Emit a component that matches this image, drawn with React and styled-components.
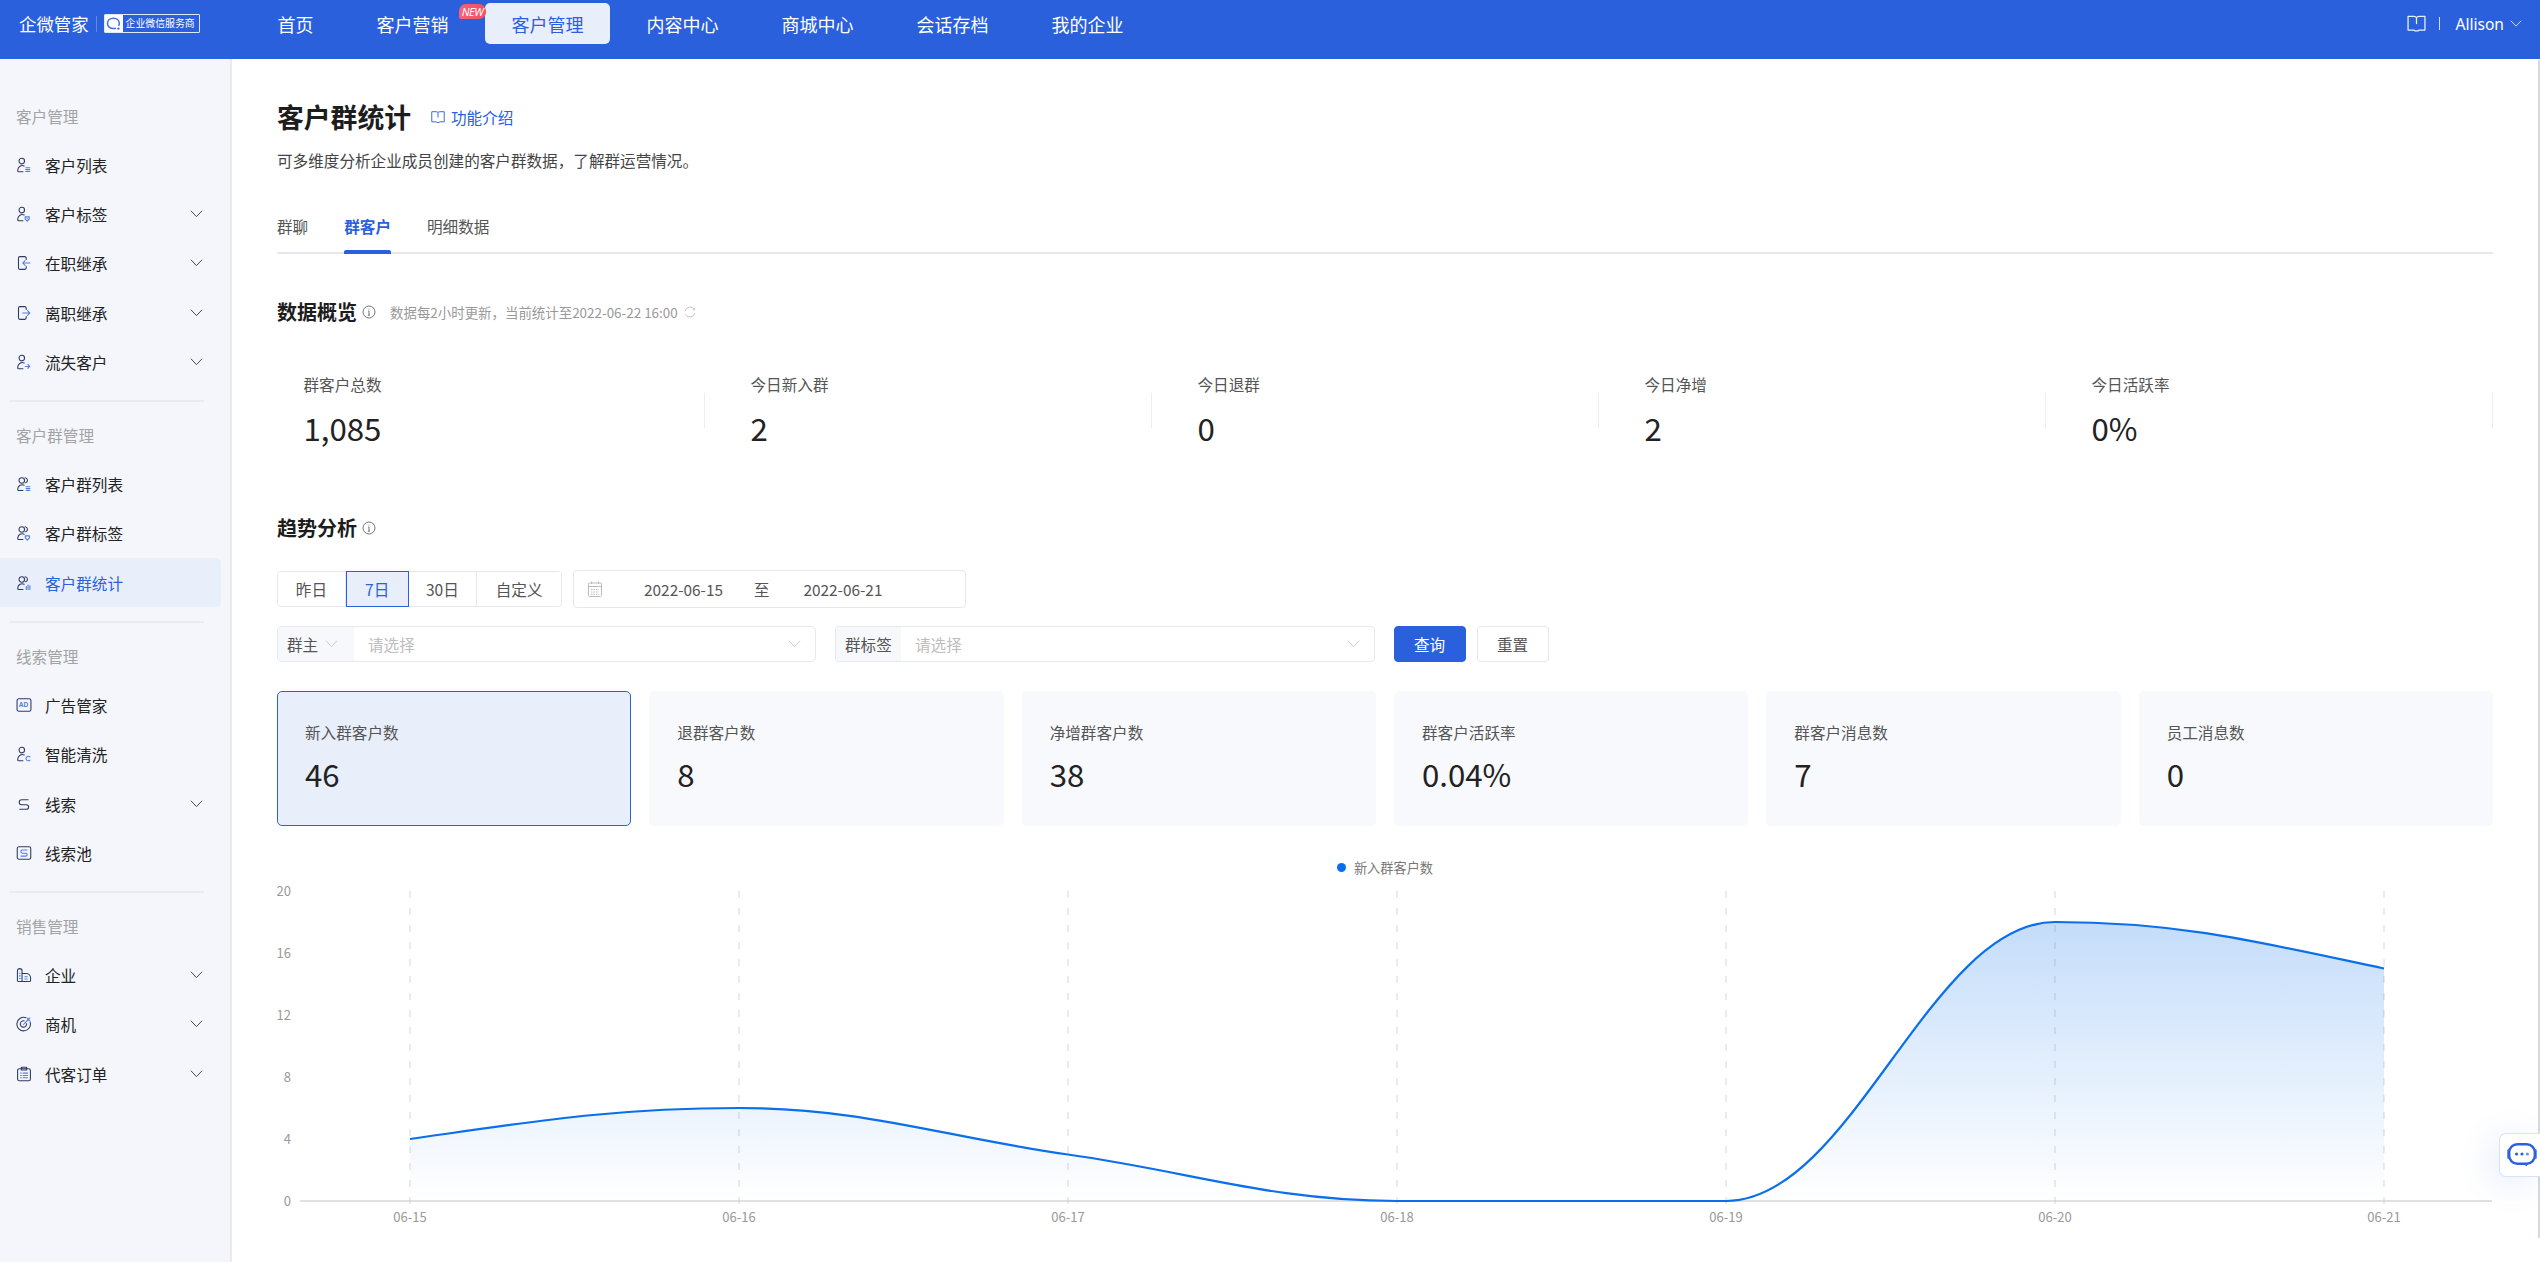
import React from 'react';
import styled, { createGlobalStyle } from 'styled-components';

const FONT = '"Noto Sans CJK SC", "Noto Sans", sans-serif';
const BLUE = '#2b60dc';

const Global = createGlobalStyle`
  html, body { margin: 0; padding: 0; height: 100%; overflow: hidden; background: #fff; }
  body { font-family: ${FONT}; color: #222; }
  * { box-sizing: border-box; }
`;

const Page = styled.div`
  width: 2540px; height: 1262px; display: flex; flex-direction: column; position: relative; overflow: hidden;
`;

/* ---------- top bar ---------- */
const TopBar = styled.header`
  height: 59px; flex: none; background: ${BLUE}; display: flex; align-items: flex-start; padding: 3px 18px 0 19px; color: #fff;
`;
const Brand = styled.div`
  width: 232px; height: 41px; flex: none; display: flex; align-items: center; font-size: 17.4px; line-height: 41px;
`;
const BrandRule = styled.span`
  width: 1px; height: 16px; background: rgba(255,255,255,.25); margin: 0 7px;
`;
const Partner = styled.span`
  display: flex; height: 19px; width: 96px; border: 1px solid rgba(255,255,255,.85); align-items: center; font-size: 9.9px; line-height: 17px; border-radius: 1px;
`;
const PartnerMark = styled.span`
  width: 18px; height: 17px; background: #fff; display: flex; align-items: center; justify-content: center; flex: none; margin-right: 3px;
`;
const Nav = styled.nav`
  display: flex; gap: 10px; 
`;
const NavItem = styled.a`
  position: relative; height: 41px; padding: 0 26.5px; display: flex; align-items: center; font-size: 18px; border-radius: 5px;
  color: ${p => (p.$active ? BLUE : '#fff')}; background: ${p => (p.$active ? '#e8eefa' : 'transparent')};
`;
const NewBadge = styled.span`
  position: absolute; left: 109px; top: 1px; width: 27px; height: 15px; z-index: 2; border-radius: 7px 7px 7px 2px;
  background: linear-gradient(90deg, #f2647c, #f54d5d); color: #fff; font-size: 11px; line-height: 15px; font-style: italic; text-align: center; letter-spacing: -.4px; font-family: "Noto Sans", sans-serif;
`;
const TopRight = styled.div`
  margin-left: auto; height: 41px; display: flex; align-items: center; font-size: 15.6px; font-family: "Noto Sans", sans-serif;
`;
const TopRule = styled.span`
  width: 1px; height: 13px; background: rgba(255,255,255,.8); margin: 0 15px 0 13px;
`;
const UserChevron = styled.span`
  display: flex; margin-left: 6px;
`;

/* ---------- shell ---------- */
const Shell = styled.div`
  flex: 1; display: flex; min-height: 0;
`;
const Side = styled.aside`
  width: 232px; flex: none; background: #f4f6fb; border-right: 2px solid #e9ebf1; padding-top: 44.6px;
`;
const SideLabel = styled.div`
  font-size: 15.6px; line-height: 24px; color: #a3a3a3; padding-left: 16px; margin-bottom: 12.6px;
`;
const SideRule = styled.div`
  height: 2px; background: #e9ebf0; margin: 14px 26px 20.5px 10px;
`;
const SideItem = styled.a`
  height: 49.25px; width: 221px; display: flex; align-items: center; padding: 0 18px 0 16px; font-size: 15.6px; border-radius: 0 5px 5px 0;
  color: ${p => (p.$active ? BLUE : '#222')}; background: ${p => (p.$active ? '#e8eefa' : 'transparent')};
`;
const SideIcon = styled.span`
  width: 16px; height: 18px; margin-right: 13px; display: flex; align-items: center; justify-content: center; flex: none;
`;
const SideChevron = styled.span`
  margin-left: auto; display: flex;
`;
const Glyph = styled.svg`
  display: block; fill: none; stroke: #2d3a63; stroke-width: 1.2; stroke-linecap: round; stroke-linejoin: round;
  .a { stroke: #4c7ce6; }
  .f { fill: #4c7ce6; stroke: none; }
  text { fill: #4c7ce6; stroke: none; font-family: "Liberation Sans", sans-serif; font-size: 7.5px; font-weight: 700; }
`;

const Main = styled.main`
  flex: 1; min-width: 0; padding: 40px 47px 0 45px; overflow: hidden;
`;
const TitleRow = styled.div`
  display: flex; align-items: center; height: 36px;
`;
const Title = styled.h1`
  margin: 0; font-size: 26.8px; line-height: 36px; font-weight: 700; color: #1d1d1d;
`;
const HelpLink = styled.a`
  margin-left: 20px; display: flex; align-items: center; gap: 6px; font-size: 15.6px; color: ${BLUE};
`;
const Sub = styled.p`
  margin: 13px 0 0; font-size: 15.6px; line-height: 24px; color: #444;
`;
const Tabs = styled.div`
  display: flex; gap: 36px; height: 49px; margin-top: 33px; border-bottom: 2px solid #e5e8ee;
`;
const Tab = styled.a`
  position: relative; font-size: 15.6px; line-height: 24px; padding-top: 9px; height: 47px; color: ${p => (p.$active ? BLUE : '#555')}; font-weight: ${p => (p.$active ? 700 : 400)};
  ${p => p.$active && `&::after { content: ""; position: absolute; left: 0; right: 0; bottom: -2px; height: 4px; background: ${BLUE}; border-radius: 2px 2px 0 0; }`}
`;
const SectionHead = styled.div`
  display: flex; align-items: center; height: 28px; margin-top: ${p => p.$top}px;
`;
const SectionTitle = styled.h2`
  margin: 0; font-size: 20px; line-height: 28px; font-weight: 700; color: #1d1d1d;
`;
const InfoWrap = styled.span`
  display: flex; margin-left: 5px; color: #777;
`;
const Hint = styled.span`
  margin-left: 14px; font-size: 13.45px; color: #999; white-space: nowrap;
`;
const RefreshWrap = styled.span`
  display: flex; margin-left: 6px;
`;

const Overview = styled.div`
  display: grid; grid-template-columns: repeat(5, 447px); margin: 45.5px 0 0 -19.5px;
`;
const OverviewCell = styled.div`
  position: relative; padding-left: 46px;
  &::after { content: ""; position: absolute; right: 0; top: 21px; height: 35px; width: 1px; background: #eceef2; }
`;
const StatLabel = styled.div`
  font-size: 15.6px; line-height: 24px; color: #555;
`;
const StatValue = styled.div`
  font-size: 31.2px; line-height: 40px; margin-top: ${p => p.$gap}px; color: #222; font-weight: 400;
`;

const ControlRow = styled.div`
  display: flex; align-items: center; height: ${p => p.$h}px; margin-top: ${p => p.$top}px;
`;
const Segments = styled.div`
  display: flex; height: 36px; width: 285px; border: 1px solid #e6e8ec; border-radius: 4px;
`;
const Segment = styled.button`
  width: ${p => p.$w}px; height: ${p => (p.$active ? '36px' : '34px')}; margin: ${p => (p.$active ? '-1px 0' : 0)}; padding: 0; font: inherit; font-size: 15.6px; font-family: ${FONT};
  background: ${p => (p.$active ? '#e8eefa' : '#fff')}; color: ${p => (p.$active ? BLUE : '#555')};
  border: ${p => (p.$active ? `1px solid ${BLUE}` : 'none')}; border-right: ${p => (p.$active ? `1px solid ${BLUE}` : '1px solid #e6e8ec')};
  border-radius: ${p => (p.$first ? '3px 0 0 3px' : 0)};
  &:last-child { border-right: none; border-radius: 0 3px 3px 0; }
`;
const DateRange = styled.div`
  margin-left: 11px; width: 393px; height: 38px; border: 1px solid #e6e8ec; border-radius: 4px; display: flex; align-items: center; padding-left: 14px; font-size: 15.4px; color: #555;
`;
const DateValue = styled.span`
  margin-left: ${p => p.$left}px; white-space: nowrap;
`;
const Select = styled.div`
  width: ${p => p.$w}px; height: 36px; margin-right: ${p => p.$gap}px; border: 1px solid #e6e8ec; border-radius: 4px; display: flex; align-items: center; font-size: 15.6px; flex: none; padding-right: 14px;
`;
const Addon = styled.span`
  width: ${p => p.$w}px; height: 34px; background: #f7f8fc; border-radius: 3px 0 0 3px; display: flex; align-items: center; padding-left: 9px; gap: 7px; color: #555; flex: none;
`;
const Placeholder = styled.span`
  margin-left: 14px; color: #bdbdbd;
`;
const SelectChevron = styled.span`
  margin-left: auto; display: flex;
`;
const Button = styled.button`
  width: 72px; height: 36px; margin-right: 11px; padding: 0; font-size: 15.6px; font-family: ${FONT}; border-radius: 4px; flex: none;
  background: ${p => (p.$primary ? BLUE : '#fff')}; color: ${p => (p.$primary ? '#fff' : '#555')}; border: 1px solid ${p => (p.$primary ? BLUE : '#e6e8ec')};
`;
const Cards = styled.div`
  display: grid; grid-template-columns: repeat(6, 1fr); gap: 18px; margin-top: 29px;
`;
const Card = styled.div`
  height: 135px; border-radius: 5px; padding: 27.5px 27px 0; background: ${p => (p.$active ? '#e8eefa' : '#f8f9fd')}; border: 1px solid ${p => (p.$active ? BLUE : '#f8f9fd')};
`;
const Legend = styled.div`
  display: flex; justify-content: center; align-items: center; gap: 8px; height: 20px; margin-top: 31px; font-size: 13.2px; color: #777;
`;
const LegendDot = styled.span`
  width: 9px; height: 9px; border-radius: 50%; background: #0a6fea;
`;
const ChartSvg = styled.svg`
  display: block; width: 2216px; height: 360px;
  text { font-family: ${FONT}; font-size: 13px; fill: #999; }
`;
const HelpFloat = styled.div`
  position: absolute; right: 0; top: 1133px; width: 41px; height: 44px; background: #fff; border: 1px solid #d5e3fb; border-right: none; border-radius: 7px 0 0 7px;
  display: flex; align-items: center; justify-content: center; box-shadow: -8px 6px 34px rgba(70,110,230,.12); padding-left: 4px;
`;
const ScrollThumb = styled.div`
  position: absolute; right: 0; top: 60px; width: 2px; height: 1178px; background: #d8d9dc;
`;

/* ---------- drawings ---------- */
const Chevron = ({ color = '#3b4668', w = 13 }) => (
  <svg width={w} height={w * 0.6} viewBox="0 0 13 8" fill="none" stroke={color} strokeWidth="1"><path d="M.8.8l5.7 6 5.7-6" /></svg>
);
const Book = ({ color, size }) => (
  <svg width={size} height={size} viewBox="0 0 18 18" fill="none" stroke={color} strokeWidth="1.2" strokeLinejoin="round">
    <path d="M1 2.2h5.5c1.2 0 2 .5 2.5 1.2.5-.7 1.3-1.2 2.5-1.2H17v13H11.5l-1 .8h-3l-1-.8H1z" />
    <path d="M9 3.4v6.2" />
  </svg>
);
const Info = () => (
  <svg width="14" height="14" viewBox="0 0 14 14" fill="none" stroke="#777" strokeWidth="1"><circle cx="7" cy="7" r="6" /><path d="M7 6v4.2M6 10.2h2M6.2 6H7" /><circle cx="7" cy="3.9" r=".5" fill="#777" stroke="none" /></svg>
);
const Refresh = () => (
  <svg width="12" height="12" viewBox="0 0 12 12" fill="none" stroke="#c4c4c4" strokeWidth="1"><path d="M10.5 3.6A5 5 0 0 0 1.2 5M1.5 8.4a5 5 0 0 0 9.3-1.4" /><path d="M10.6 1.8v2h-2" /></svg>
);
const Calendar = () => (
  <svg width="14" height="16" viewBox="0 0 14 16" fill="none" stroke="#bcbcbc" strokeWidth="1"><rect x=".5" y="2" width="13" height="13.5" rx="1" /><path d="M.5 5.5h13M3.5.5v2.5M10.5.5v2.5" /><path d="M3 8.5h8M3 11h8M3 13.3h8" strokeDasharray="1.5 1" /></svg>
);
const Person = () => (<>
  <circle cx="6.5" cy="4.6" r="3.1" />
  <path d="M9.2 10.2A5 5 0 0 0 2 14.3v1.4c0 .5.3.8.8.8h5" />
</>);
const Group = () => (<>
  <circle cx="6.5" cy="5" r="3.1" />
  <path d="M10.3 1.9a3 3 0 0 1 .6 5.8M9.2 10.4A5 5 0 0 0 2 14.3v1.2c0 .5.3.8.8.8h5" />
</>);
const icons = {
  list: <><Person /><path className="a" d="M11 12h4.5M11 14.2h4.5M11 16.4h4.5" /></>,
  tag: <><Person /><path className="a" d="M12.6 17l-2.3-2.4v-2.4h4.6v2.4zM12.6 14.2v.1" /></>,
  doorIn: <><path d="M11.5 5V3.6c0-1-.6-1.8-1.6-1.8H4.4c-1 0-1.6.8-1.6 1.8v10.8c0 1 .6 1.8 1.6 1.8h5.5c1 0 1.6-.8 1.6-1.8V13" /><path className="a" d="M15.6 9H7.6M10.2 6.3L7.6 9l2.6 2.7" /></>,
  doorOut: <><path d="M11.5 5V3.6c0-1-.6-1.8-1.6-1.8H4.4c-1 0-1.6.8-1.6 1.8v10.8c0 1 .6 1.8 1.6 1.8h5.5c1 0 1.6-.8 1.6-1.8V13" /><path className="a" d="M7.6 9h8M13 6.3L15.6 9 13 11.7" /></>,
  lost: <><Person /><path className="a" d="M10.4 14h5M13.3 11.8l2.1 2.2-2.1 2.2" /></>,
  gList: <><Group /><path className="a" d="M11.4 12h4.2M11.4 14.2h4.2M11.4 16.4h4.2" /></>,
  gTag: <><Group /><path className="a" d="M12.8 17l-2.3-2.4v-2.4h4.6v2.4z" /></>,
  gStat: <><Group /><path className="a" d="M11.6 13v3.4M13.6 11.2v5.2M15.6 12.2v4.2" /></>,
  ad: <><rect x="1.2" y="2" width="15.6" height="14" rx="2" /><text x="3.1" y="11.7">AD</text></>,
  clean: <><Person /><path className="a" d="M15.8 12.3a2.6 2.6 0 1 0 0 3.5" /></>,
  clue: <><path d="M13.6 4.2H6.4a2.8 2.8 0 0 0 0 5.6h5.2a2.6 2.6 0 0 1 0 5.2H4.2" /></>,
  pool: <><rect x="1.4" y="2" width="15.2" height="14" rx="2" /><path className="a" d="M12.4 5.6H7.2a1.8 1.8 0 0 0 0 3.6h3.7a1.6 1.6 0 0 1 0 3.3H5.6" /></>,
  corp: <><path d="M8.8 16.4H3.2c-.9 0-1.6-.7-1.6-1.6V4.4c0-1.5 1.2-2.6 2.6-2.6s2.6 1.1 2.6 2.6v12M6.8 7.4h4.6c2.8 0 5 2.2 5 5v2.4c0 .9-.7 1.6-1.6 1.6H6.8" /><path className="a" d="M3.8 7h1M3.8 10h1M3.8 13h1M10 11h2.6M10 13.6h2.6" /></>,
  target: <><path d="M15.8 6.6A7.6 7.6 0 1 1 11.3 2" /><path d="M12 8.6A3.6 3.6 0 1 1 9.2 5.4" /><path className="a" d="M8.6 9.4l7-7.2M13.2 2.4v2.4h2.4" /></>,
  order: <><rect x="1.8" y="3" width="14.4" height="13.6" rx="2" /><path d="M6 1.4h6v3.2H6z" /><path className="a" d="M5.2 8h.8M8 8h5M5.2 10.6h.8M8 10.6h5M5.2 13.2h.8M8 13.2h5" /></>,
};
const SideGlyph = ({ name }) => (
  <Glyph width="18" height="18" viewBox="0 0 18 18">{icons[name]}</Glyph>
);
const PartnerIcon = () => (
  <svg width="15" height="14" viewBox="0 0 15 14" fill="none" stroke="#3f6fe0" strokeWidth="1.5"><path d="M10 11.2c-.8.3-1.6.4-2.6.4C4 11.6 1.5 9.4 1.5 6.4S4 1.2 7.4 1.2s5.9 2.2 5.9 5.2c0 .9-.3 1.8-.7 2.5" /><circle cx="12.4" cy="11.6" r="1.2" fill="#3f6fe0" stroke="none" /></svg>
);
const Bot = () => (
  <svg width="30" height="25" viewBox="0 0 30 25" fill="none">
    <rect x="0" y="6" width="3" height="10" rx="1.5" fill="#6f93ec" />
    <rect x="27" y="6" width="3" height="10" rx="1.5" fill="#6f93ec" />
    <rect x="2.2" y="1.2" width="25.6" height="19.6" rx="8" stroke={BLUE} strokeWidth="2.4" />
    <path d="M17 20l2.2 3.4 2.6-3.4" fill={BLUE} />
    <circle cx="9.6" cy="11" r="1.6" fill={BLUE} /><circle cx="15" cy="11" r="1.6" fill={BLUE} /><circle cx="20.4" cy="11" r="1.6" fill="#6f93ec" />
  </svg>
);

/* ---------- data ---------- */
const navItems = ['首页', '客户营销', '客户管理', '内容中心', '商城中心', '会话存档', '我的企业'];
const sideSections = [
  { label: '客户管理', items: [['客户列表', 'list'], ['客户标签', 'tag', 1], ['在职继承', 'doorIn', 1], ['离职继承', 'doorOut', 1], ['流失客户', 'lost', 1]] },
  { label: '客户群管理', items: [['客户群列表', 'gList'], ['客户群标签', 'gTag'], ['客户群统计', 'gStat', 0, 1]] },
  { label: '线索管理', items: [['广告管家', 'ad'], ['智能清洗', 'clean'], ['线索', 'clue', 1], ['线索池', 'pool']] },
  { label: '销售管理', items: [['企业', 'corp', 1], ['商机', 'target', 1], ['代客订单', 'order', 1]] },
];
const overview = [['群客户总数', '1,085'], ['今日新入群', '2'], ['今日退群', '0'], ['今日净增', '2'], ['今日活跃率', '0%']];
const metrics = [['新入群客户数', '46'], ['退群客户数', '8'], ['净增群客户数', '38'], ['群客户活跃率', '0.04%'], ['群客户消息数', '7'], ['员工消息数', '0']];

const X0 = 410, DX = 329, BASE = 1201, UNIT = 15.5;
const dates = ['06-15', '06-16', '06-17', '06-18', '06-19', '06-20', '06-21'];
const series = [4, 6, 3, 0, 0, 18, 15];
const pts = series.map((v, i) => [X0 + i * DX, BASE - v * UNIT]);
const slopes = pts.slice(1).map((p, i) => (p[1] - pts[i][1]) / DX);
const tan = pts.map((_, i) => {
  if (i === 0 || i === pts.length - 1) return null;
  const a = slopes[i - 1], b = slopes[i];
  if (a * b <= 0) return 0;
  return Math.sign(a) * Math.min(Math.abs(a), Math.abs(b));
});
tan[0] = (3 * slopes[0] - tan[1]) / 2;
tan[pts.length - 1] = (3 * slopes[slopes.length - 1] - tan[pts.length - 2]) / 2;
const linePath = pts.reduce((d, p, i) => {
  if (i === 0) return `M${p[0]} ${p[1]}`;
  const q = pts[i - 1], h = DX * 0.38;
  return `${d}C${q[0] + h} ${q[1] + tan[i - 1] * h} ${p[0] - h} ${p[1] - tan[i] * h} ${p[0]} ${p[1]}`;
}, '');
const areaPath = `${linePath}L${pts[6][0]} ${BASE}L${pts[0][0]} ${BASE}Z`;

const Chart = () => (
  <ChartSvg viewBox="277 877 2216 360">
    <defs>
      <linearGradient id="fill" x1="0" y1="0" x2="0" y2="1">
        <stop offset="0" stopColor="#0a6fea" stopOpacity=".24" />
        <stop offset="1" stopColor="#0a6fea" stopOpacity="0" />
      </linearGradient>
    </defs>
    {[20, 16, 12, 8, 4, 0].map((v) => (
      <text key={v} x="291" y={BASE - v * UNIT + 5} textAnchor="end">{v}</text>
    ))}
    {dates.map((d, i) => (
      <g key={d}>
        <line x1={X0 + i * DX} x2={X0 + i * DX} y1="891" y2={BASE + 5} stroke="#e2e3e6" strokeWidth="1.4" strokeDasharray="7 10" />
        <text x={X0 + i * DX} y="1222" textAnchor="middle">{d}</text>
      </g>
    ))}
    <path d={areaPath} fill="url(#fill)" />
    <line x1="300" x2="2492" y1={BASE} y2={BASE} stroke="#c2c2c2" strokeWidth="1" />
    <path d={linePath} fill="none" stroke="#0a6fea" strokeWidth="2.2" />
  </ChartSvg>
);

export default function App() {
  return (
    <Page>
      <Global />
      <TopBar>
        <Brand>
          企微管家<BrandRule />
          <Partner><PartnerMark><PartnerIcon /></PartnerMark>企业微信服务商</Partner>
        </Brand>
        <Nav>
          {navItems.map((n, i) => (
            <NavItem key={n} $active={i === 2}>{n}{i === 1 && <NewBadge>NEW</NewBadge>}</NavItem>
          ))}
        </Nav>
        <TopRight>
          <Book color="#eaf0ff" size={19} />
          <TopRule />
          Allison
          <UserChevron><Chevron color="#dfe7fb" w={12} /></UserChevron>
        </TopRight>
      </TopBar>
      <Shell>
        <Side>
          {sideSections.map((s, i) => (
            <React.Fragment key={s.label}>
              {i > 0 && <SideRule />}
              <SideLabel>{s.label}</SideLabel>
              {s.items.map(([text, icon, more, active]) => (
                <SideItem key={text} $active={!!active}>
                  <SideIcon><SideGlyph name={icon} /></SideIcon>
                  {text}
                  {more ? <SideChevron><Chevron /></SideChevron> : null}
                </SideItem>
              ))}
            </React.Fragment>
          ))}
        </Side>
        <Main>
          <TitleRow>
            <Title>客户群统计</Title>
            <HelpLink><Book color={BLUE} size={14} />功能介绍</HelpLink>
          </TitleRow>
          <Sub>可多维度分析企业成员创建的客户群数据，了解群运营情况。</Sub>
          <Tabs>
            <Tab>群聊</Tab>
            <Tab $active>群客户</Tab>
            <Tab>明细数据</Tab>
          </Tabs>
          <SectionHead $top={44}>
            <SectionTitle>数据概览</SectionTitle>
            <InfoWrap><Info /></InfoWrap>
            <Hint>数据每2小时更新，当前统计至2022-06-22 16:00</Hint>
            <RefreshWrap><Refresh /></RefreshWrap>
          </SectionHead>
          <Overview>
            {overview.map(([l, v]) => (
              <OverviewCell key={l}>
                <StatLabel>{l}</StatLabel>
                <StatValue $gap={12}>{v}</StatValue>
              </OverviewCell>
            ))}
          </Overview>
          <SectionHead $top={66.5}>
            <SectionTitle>趋势分析</SectionTitle>
            <InfoWrap><Info /></InfoWrap>
          </SectionHead>
          <ControlRow $h={38} $top={28}>
            <Segments>
              <Segment $w={68} $first>昨日</Segment>
              <Segment $w={63} $active>7日</Segment>
              <Segment $w={69}>30日</Segment>
              <Segment $w={84}>自定义</Segment>
            </Segments>
            <DateRange>
              <Calendar />
              <DateValue $left={42}>2022-06-15</DateValue>
              <DateValue $left={31}>至</DateValue>
              <DateValue $left={34}>2022-06-21</DateValue>
            </DateRange>
          </ControlRow>
          <ControlRow $h={36} $top={18}>
            <Select $w={539} $gap={19}>
              <Addon $w={76}>群主<Chevron color="#c8c8c8" /></Addon>
              <Placeholder>请选择</Placeholder>
              <SelectChevron><Chevron color="#c8c8c8" /></SelectChevron>
            </Select>
            <Select $w={540} $gap={18.5}>
              <Addon $w={65}>群标签</Addon>
              <Placeholder>请选择</Placeholder>
              <SelectChevron><Chevron color="#c8c8c8" /></SelectChevron>
            </Select>
            <Button $primary>查询</Button>
            <Button>重置</Button>
          </ControlRow>
          <Cards>
            {metrics.map(([l, v], i) => (
              <Card key={l} $active={i === 0}>
                <StatLabel>{l}</StatLabel>
                <StatValue $gap={10.5}>{v}</StatValue>
              </Card>
            ))}
          </Cards>
          <Legend><LegendDot />新入群客户数</Legend>
          <Chart />
        </Main>
      </Shell>
      <ScrollThumb />
      <HelpFloat><Bot /></HelpFloat>
    </Page>
  );
}
